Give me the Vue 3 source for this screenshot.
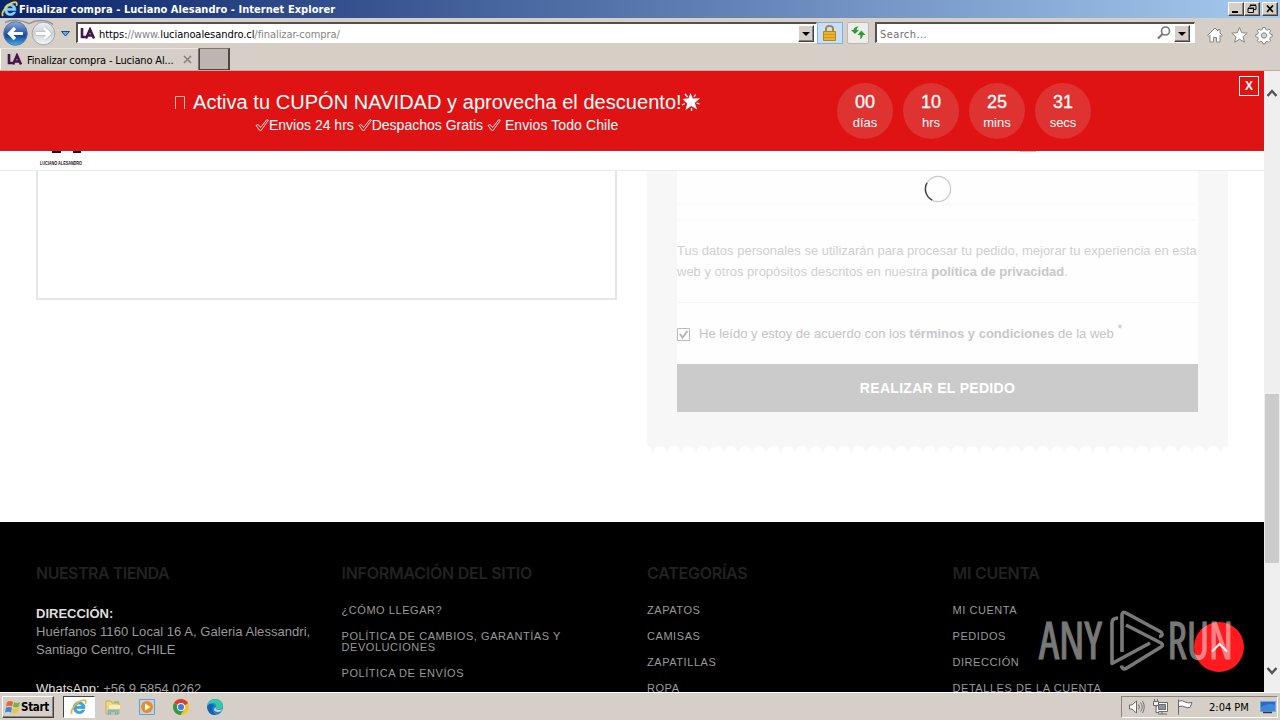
<script setup>
const timer = [
  { n: '00', label: 'días' },
  { n: '10', label: 'hrs' },
  { n: '25', label: 'mins' },
  { n: '31', label: 'secs' },
]
const columns = [
  { title: 'Información del sitio', links: ['¿Cómo llegar?', 'Política de cambios, garantías y devoluciones', 'Política de envíos'] },
  { title: 'Categorías', links: ['Zapatos', 'Camisas', 'Zapatillas', 'Ropa'] },
  { title: 'Mi cuenta', links: ['Mi cuenta', 'Pedidos', 'Dirección', 'Detalles de la cuenta'] },
]
</script>

<template>
  <div class="screen">
    <header class="titlebar">
      <svg class="ie" width="18" height="18" viewBox="0 0 18 18">
        <path d="M15 10.500H6.200c.2 3.400 4.700 3.800 5.800 1.500h2.700c-1.500 5.200-11.300 5.200-11.300-2.700 0-7.500 12-7.500 11.600 1.200zM6.300 8.300h5.500c-.4-3-5-3-5.500 0z" fill="#7fd0fa" stroke="#7fd0fa" stroke-width=".5" />
        <path d="M2 16C-1 12 8 2.500 14 2.200c2.300 0 2 2.300 1.300 3.500" fill="none" stroke="#f2d33c" stroke-width="1.700" />
      </svg>
      <span class="title">Finalizar compra - Luciano Alesandro - Internet Explorer</span>
      <div class="winbtns">
        <button><svg width="14" height="12"><path d="M3 9h6" stroke="#000" stroke-width="2" /></svg></button>
        <button><svg width="14" height="12"><path d="M5 2.500h6v4H9M5 2.500V4M5 2h6" fill="none" stroke="#000" /><path d="M3 5.500h5.500v4H3zM3 5h6" fill="none" stroke="#000" /></svg></button>
        <button class="close"><svg width="14" height="12"><path d="M4 2.500l6 6.500M10 2.500l-6 6.500" stroke="#000" stroke-width="1.700" /></svg></button>
      </div>
    </header>

    <div class="toolbar">
      <svg class="nav" width="76" height="30" viewBox="0 0 76 30">
        <defs>
          <linearGradient id="blue" x1="0" y1="0" x2="0" y2="1"><stop offset="0" stop-color="#8fadd8" /><stop offset=".45" stop-color="#2c5fb4" /><stop offset=".6" stop-color="#1248a0" /><stop offset="1" stop-color="#45b0f2" /></linearGradient>
          <linearGradient id="pale" x1="0" y1="0" x2="0" y2="1"><stop offset="0" stop-color="#eef0f2" /><stop offset=".5" stop-color="#cdd2d8" /><stop offset="1" stop-color="#f4f8fb" /></linearGradient>
        </defs>
        <path d="M5 4.500C12 1 22 2 29 5.500c8-4 18-4 24 1" fill="none" stroke="#8e949c" stroke-width="1.500" />
        <circle cx="15.500" cy="15.500" r="11.800" fill="url(#blue)" stroke="#5d789f" />
        <circle cx="43.500" cy="15.500" r="11.300" fill="url(#pale)" stroke="#a0a6ad" />
        <path d="M23 15.500H9.500M15 10l-5.500 5.500 5.500 5.500" fill="none" stroke="#fff" stroke-width="3.200" />
        <path d="M36 15.500h14M44 10l5.500 5.500-5.500 5.500" fill="none" stroke="#b0b4bb" stroke-width="4.200" />
        <path d="M36 15.500h14M44 10l5.500 5.500-5.500 5.500" fill="none" stroke="#fff" stroke-width="3" />
        <path d="M61.500 13.500h8l-4 4.500z" fill="#5fb0ea" stroke="#1c4775" />
      </svg>
      <div class="address">
        <svg class="la" width="15" height="13" viewBox="0 0 15 13"><path d="M2 1v9h5M6 11.500L10 2.500l4 9M8 8.500h5" fill="none" stroke="#45164d" stroke-width="2.600" /></svg>
        <span class="url">https:<i>//www.</i>lucianoalesandro.cl<i>/finalizar-compra/</i></span>
        <span class="drop"></span>
      </div>
      <span class="lock"><svg width="24" height="20" viewBox="0 0 24 20"><path d="M8 9V5.500C8 2 15 2 15 5.500V9" fill="none" stroke="#a18436" stroke-width="1.800" /><path d="M5.500 8.500h12v9h-12z" fill="#eab52d" stroke="#b98412" /><path d="M6 11.500h11M6 14.500h11" stroke="#cf9a18" /></svg></span>
      <span class="refresh"><svg width="20" height="20" viewBox="0 0 20 20"><path d="M3 7l4 4 4-4H8.500q0-2 2-3.500Q6 3.500 5.500 7z" fill="#2e9b35" /><path d="M9.500 12l3.800-4.500L17.500 12h-2.700q0 3-3 4 1-1.500.5-4z" fill="#2e9b35" /></svg></span>
      <div class="search">
        <span>Search...</span>
        <svg width="16" height="16" viewBox="0 0 16 16"><circle cx="9.500" cy="6" r="4" fill="none" stroke="#777" stroke-width="1.600" /><path d="M6.500 9L2 13.500" stroke="#777" stroke-width="2.200" /></svg>
        <span class="drop"></span>
      </div>
      <svg class="tools" width="74" height="20" viewBox="0 0 74 20">
        <g fill="#fff" stroke="#8b8782" stroke-width="1">
          <path d="M1.500 10.500L9 3l3 3V4.500h2V8l2.500 2.500-1.500 1-1-1V17h-3.500v-4.500h-3V17H4v-6.500l-1 1z" />
          <path d="M33.500 2.500l2.200 5.200 5.600.4-4.300 3.600 1.400 5.500-4.900-3-4.900 3 1.400-5.500-4.300-3.600 5.600-.4z" />
          <path d="M56.800 2.500h2.400l.5 2 1.500.6 1.800-1.100 1.700 1.700-1.100 1.800.6 1.500 2 .5v2.400l-2 .5-.6 1.500 1.100 1.800-1.700 1.700-1.800-1.100-1.500.6-.5 2h-2.400l-.5-2-1.500-.6-1.800 1.100-1.700-1.700 1.100-1.800-.6-1.500-2-.5V9.500l2-.5.6-1.500-1.100-1.800 1.700-1.700 1.800 1.100 1.500-.6z" />
          <circle cx="58" cy="10.500" r="2.700" fill="#d6cfc7" />
        </g>
      </svg>
    </div>

    <div class="tabs">
      <div class="tab">
        <svg class="la" width="15" height="13" viewBox="0 0 15 13"><path d="M2 1v9h5M6 11.500L10 2.500l4 9M8 8.500h5" fill="none" stroke="#45164d" stroke-width="2.600" /></svg>
        <span>Finalizar compra - Luciano Al...</span>
        <svg class="x" width="9" height="9"><path d="M1 1l7 7M8 1L1 8" stroke="#85817c" stroke-width="1.600" /></svg>
      </div>
      <div class="newtab"></div>
    </div>

    <div class="view">
      <div class="page">
        <section class="banner">
          <div class="promo">
            <div class="big"><svg width="12" height="15"><path d="M.5 14V1.500h9V14" fill="none" stroke="#ffb9a8" /></svg><span>Activa tu CUPÓN NAVIDAD y aprovecha el descuento!</span><svg width="20" height="20" viewBox="0 0 20 20"><path d="M9.500 1l2.300 5.500 7.200-.2-5.200 4.700 2.400 6.500-6-3.400-5.700 3.900 1.700-6.500L1.500 7l6-.7z" fill="#fff" /><path d="M4 2l2.500 3M14.500 2.500L13 5M18.500 12l-3-1M10.500 19v-3M1 13l3-1.500" stroke="#fff" stroke-width="1.300" /></svg></div>
            <div class="small">
              <svg width="14" height="14" viewBox="0 0 14 14"><path d="M1 7.500l2-1 2.500 3L12 1.500l1.300.8L6 12.500H4.800z" fill="none" stroke="#ffe0d8" /></svg><span>Envios 24 hrs </span>
              <svg width="14" height="14" viewBox="0 0 14 14"><path d="M1 7.500l2-1 2.500 3L12 1.500l1.300.8L6 12.500H4.800z" fill="none" stroke="#ffe0d8" /></svg><span>Despachos Gratis </span>
              <svg width="14" height="14" viewBox="0 0 14 14"><path d="M1 7.500l2-1 2.500 3L12 1.500l1.300.8L6 12.500H4.800z" fill="none" stroke="#ffe0d8" /></svg><span class="last">&nbsp;Envios Todo Chile</span>
            </div>
          </div>
          <div class="timer">
            <div v-for="t in timer" :key="t.label" class="unit"><b>{{ t.n }}</b><span>{{ t.label }}</span></div>
          </div>
          <button class="bx">X</button>
        </section>

        <div class="sitehead">
          <svg width="46" height="16" viewBox="0 0 46 16"><path d="M13 1h9M34 1h8" stroke="#2a0a30" stroke-width="2" /><text x="1" y="14" textLength="42" lengthAdjust="spacingAndGlyphs" font-size="5" font-weight="700" font-family="Liberation Sans, sans-serif" fill="#1c0a20">LUCIANO ALESANDRO</text></svg>
          <span class="menubit"></span>
        </div>

        <main class="checkout">
          <div class="frame"></div>
          <div class="order">
            <div class="inner">
              <div class="pay"><svg width="28" height="28" viewBox="0 0 28 28"><circle cx="14" cy="14" r="12.600" fill="none" stroke="#c9c9c9" stroke-width="1.300" /><path d="M3 7.900A12.600 12.600 0 0 0 8.200 25.200" fill="none" stroke="#444" stroke-width="1.500" /></svg></div>
              <p class="privacy"><span class="l1">Tus datos personales se utilizarán para procesar tu pedido, mejorar tu experiencia en esta</span><br><span class="l2">web y otros propósitos descritos en nuestra <b>política de privacidad</b>.</span></p>
              <div class="terms">
                <svg width="13" height="13"><path d="M.5.500h12v12H.5z" fill="#fff" stroke="#bbb" /><path d="M3 6l2.500 3.500L10.500 3" fill="none" stroke="#b5b5b5" stroke-width="2" /></svg>
                <span>He leído y estoy de acuerdo con los <b>términos y condiciones</b> de la web <sup>*</sup></span>
              </div>
              <button class="place">REALIZAR EL PEDIDO</button>
            </div>
          </div>
        </main>

        <footer class="footer">
          <div class="col first">
            <h4>NUESTRA TIENDA</h4>
            <p class="addr"><b>DIRECCIÓN:</b><br><span>Huérfanos 1160 Local 16 A, Galeria Alessandri,</span><br>Santiago Centro, CHILE</p>
            <p class="wa"><b>WhatsApp:</b> +56 9 5854 0262</p>
          </div>
          <div v-for="c in columns" :key="c.title" class="col">
            <h4>{{ c.title }}</h4>
            <ul><li v-for="l in c.links" :key="l">{{ l }}</li></ul>
          </div>
          <svg class="watermark" width="212" height="66" viewBox="0 0 212 66">
            <circle cx="184" cy="37" r="25" fill="#fe1a1e" />
            <path d="M177 41.500l7.500-7.500 7.500 7.500" fill="none" stroke="#fff" stroke-width="2" />
            <g opacity=".5">
              <g fill="#f0f0f0" stroke="#f0f0f0" stroke-width="1" font-family="Open Sans, Noto Sans, sans-serif" font-size="50.500">
                <text x="4" y="48.700" textLength="63" lengthAdjust="spacingAndGlyphs">ANY</text>
                <text x="132.500" y="48.700" textLength="65.500" lengthAdjust="spacingAndGlyphs">RUN</text>
              </g>
              <g fill="none" stroke="#f0f0f0" stroke-width="3.600" stroke-linejoin="round">
                <path d="M83 8q-6 0-6 5v40.500L115 33" />
                <path d="M87 42V5q0-4 4-2l35 19q3 4-2 4.500" />
                <path d="M91 15l35 18q3 2 0 4L91 58.500q-4 1.500-4.500-3" />
              </g>
            </g>
          </svg>
        </footer>
      </div>

      <div class="scrollbar">
        <svg width="16" height="16"><path d="M3.500 11L8 6l4.500 5" fill="none" stroke="#555" stroke-width="2.500" /></svg>
        <span class="thumb"></span>
        <svg class="down" width="16" height="16"><path d="M3.500 5L8 10l4.500-5" fill="none" stroke="#555" stroke-width="2.500" /></svg>
      </div>
    </div>

    <nav class="taskbar">
      <button class="start">
        <svg width="16" height="16" viewBox="0 0 16 16"><path d="M2 3q3-2 6 0L7 7.500Q4 6 1 7.500z" fill="#ea6630" /><path d="M9 3.300q3 1.500 6 0L13.500 8Q11 9 8 7.800z" fill="#6cb83a" /><path d="M1 8.800q3-1.700 6 0L6 13.500q-3-1.500-6 0z" fill="#3b85d8" /><path d="M8 9q3 1.500 6 0l-1.500 4.500Q10 15 7 13.800z" fill="#f5c32d" /></svg>
        <span>Start</span>
      </button>
      <div class="task active"><svg width="18" height="18" viewBox="0 0 18 18"><path d="M15 10.500H6.200c.2 3.400 4.700 3.800 5.800 1.500h2.700c-1.500 5.200-11.300 5.200-11.300-2.700 0-7.500 12-7.500 11.600 1.200zM6.300 8.300h5.500c-.4-3-5-3-5.500 0z" fill="#37a5e6" stroke="#2f8fd0" stroke-width=".6" /><path d="M2 16C-1 12 8 2.500 14 2.200c2.300 0 2 2.300 1.300 3.500" fill="none" stroke="#e8b92c" stroke-width="1.700" /></svg></div>
      <div class="task"><svg width="18" height="18" viewBox="0 0 18 18"><path d="M2 3h5l1 2h7v11H2z" fill="#f1d77c" stroke="#d0ad4e" /><path d="M5 7h11v4H5z" fill="#f9eeb8" /><path d="M4 16v-4h10v4h-2.500v-2h-5v2z" fill="#7ec1e8" stroke="#5aa3d0" stroke-width=".6" /><path d="M10 4h5" stroke="#69b35a" /></svg></div>
      <div class="task"><svg width="18" height="18" viewBox="0 0 18 18"><path d="M1.500 1.500h15v15h-15z" fill="#b7d7f0" stroke="#6c9dcc" /><circle cx="9" cy="9" r="6" fill="#f28a1c" /><path d="M7 5.500l5.500 3.500L7 12.500z" fill="#fff" /></svg></div>
      <div class="task"><svg width="18" height="18" viewBox="0 0 18 18"><circle cx="9" cy="9" r="8" fill="#f8c422" /><path d="M9 9L2.100 5A8 8 0 0 1 15.900 5z" fill="#dd3c30" /><path d="M9 9L2.100 5A8 8 0 0 0 8.500 17l3.900-6z" fill="#33984b" /><path d="M5 5h11l-4 3H6z" fill="#dd3c30" /><circle cx="9" cy="9" r="4" fill="#fff" /><circle cx="9" cy="9" r="3.100" fill="#3f7de8" /></svg></div>
      <div class="task"><svg width="18" height="18" viewBox="0 0 18 18"><circle cx="9" cy="9" r="8" fill="#1b86d3" /><path d="M1.200 8Q3 1 9 1q7 0 8 6.500 0 4-4.500 4-3 0-2.500-2Q11 5 6 5 3 5 1.200 8z" fill="#36c6a8" /><path d="M1.100 8.500Q4 4.500 8 7q-4 6 2 9.900Q2 17.500 1.100 8.500z" fill="#1460ad" /><path d="M10 9q-1 3 2.500 3 2.500 0 4-1.300-1 3-3.500 3.300-5 .2-5-3z" fill="#d6cfc7" /></svg></div>
      <div class="tray">
        <svg width="72" height="18" viewBox="0 0 72 18">
          <g fill="#fff" stroke="#6a6a6a">
            <path d="M3.500 7H6l4.500-4v12L6 11H3.500z" />
            <path d="M12.500 6.500q2 2.500 0 5M14.500 4.500q3.500 4.500 0 9M16.500 3q3.500 6 0 12" fill="none" stroke-width=".9" />
            <path d="M30.500 4.500h11v9h-11zM32 16h9M36 13.500v2.500" /><path d="M32.500 6.500h7v5h-7z" fill="#8d9296" /><path d="M27.500 3.500h5v4h-5zM28.500 1v2.500M31.500 1v2.500M30 7.500v7h3" fill="#eee" />
            <path d="M52.500 1.500v15M53 3q4-1 6 1 3 1.500 7 .5l-2 5q-3 .5-5-.5-2-1.500-6-.5" />
          </g>
        </svg>
        <span>2:04 PM</span>
        <svg class="desk" width="16" height="16" viewBox="0 0 16 16"><path d="M.5 2.500h15v10H.5z" fill="#276bc8" stroke="#74a4da" /><path d="M1 8q8-5 14-2v6H1z" fill="#3f87dc" /><path d="M3 13.500h9" stroke="#334" stroke-width="1.500" /></svg>
      </div>
    </nav>
  </div>
</template>

<style>
body { margin: 0; overflow: hidden; }
</style>

<style scoped>
* { box-sizing: border-box; }
button { padding: 0; border: 0; font: inherit; }
svg { display: block; flex: none; }
.screen { width: 1280px; height: 720px; display: flex; flex-direction: column; overflow: hidden; background: #d6cfc7; font: 11px "DejaVu Sans Condensed", "DejaVu Sans", sans-serif; font-stretch: condensed; color: #000; }
.titlebar { height: 18px; flex: none; display: flex; align-items: center; background: linear-gradient(90deg, #0a246a, #a6caf0); padding: 0 2px 0 1px; }
.title { color: #fff; font-weight: 700; white-space: nowrap; flex: 1; letter-spacing: .045px; }
.winbtns { display: flex; }
.winbtns button, .drop { background: #d6cfc7; border: 1px solid; border-color: #fff #404040 #404040 #fff; box-shadow: inset -1px -1px #8a857e; }
.winbtns button { width: 16px; height: 14px; }
.winbtns .close { margin-left: 2px; }
.toolbar { height: 28px; flex: none; display: flex; align-items: flex-start; }
.address, .search { height: 21px; margin-top: 4px; background: #fff; border: 1px solid #fff; border-top: 2px solid #55504b; border-left: 2px solid #55504b; display: flex; align-items: center; white-space: nowrap; }
.address { width: 741px; padding: 0 2px; }
.url { flex: 1; margin: 2px 0 0 4px; letter-spacing: -.06px; }
.url i { font-style: normal; color: #858585; }
.drop { width: 16px; height: 17px; position: relative; }
.drop::after { content: ""; display: block; margin: 6px auto 0; width: 0; border: 4px solid transparent; border-top-color: #000; border-bottom: 0; }
.lock { width: 26px; height: 22px; margin-top: 4px; border: 1px solid #82aee0; background: #c9dff8; }
.refresh { width: 22px; height: 22px; margin: 4px 0 0 4px; border: 1px solid #bdb9b3; background: #eeedea; border-radius: 2px; }
.search { width: 320px; margin-left: 6px; padding: 0 4px 0 3px; color: #707070; }
.search > span:first-child { flex: 1; margin-top: 2px; letter-spacing: .4px; }
.search svg { margin-right: 2px; }
.tools { margin: 7px 0 0 11px; }
.tabs { height: 25px; flex: none; display: flex; border-bottom: 1px solid #d9a49b; }
.tab { width: 199px; margin-top: 2px; border-left: 1px solid #fff; border-right: 1px solid #77716b; border-top: 1px solid #e9e5e0; display: flex; align-items: center; padding-left: 6px; white-space: nowrap; }
.tab span { margin: 1px 0 0 5px; width: 156px; letter-spacing: -.16px; }
.newtab { width: 31px; height: 22px; margin-top: 2px; background: #bfb5b0; border: 1px solid #4a4642; border-top-color: #7c7670; border-width: 1px 2px 1px 1px; }
.view { height: 621px; flex: none; display: flex; }
.page { width: 1264px; height: 621px; overflow: hidden; background: #fff; font-family: "Liberation Sans", Arial, sans-serif; }
.banner { position: relative; height: 80px; background: #df1314; border-bottom: 1px solid #c3211e; color: #fff; display: flex; }
.promo { width: 837px; padding: 19px 0 0 175px; white-space: nowrap; }
.big { display: flex; height: 24px; align-items: center; font-size: 20px; }
.big span { margin-left: 6px; width: 488px; letter-spacing: .045px; }
.small { display: flex; align-items: center; height: 22px; padding-left: 80px; font-size: 14px; white-space: pre; }
.small .last { letter-spacing: .1px; }
.timer { display: flex; gap: 10px; padding-top: 12px; }
.unit { width: 56px; height: 56px; border-radius: 50%; background: #df3332; text-align: center; display: flex; flex-direction: column; }
.unit b { font-weight: 400; font-size: 18px; line-height: 20px; margin-top: 9px; -webkit-text-stroke: .3px; }
.unit span { font-size: 13px; line-height: 20px; margin-top: 1px; }
.bx { position: absolute; right: 5px; top: 5px; width: 20px; height: 20px; border: 1px solid #fff; background: none; color: #fff; font-size: 12px; font-weight: 700; }
.sitehead { height: 20px; border-bottom: 1px solid #ececec; padding-left: 39px; display: flex; }
.menubit { width: 16px; height: 1px; margin-left: 935px; background: #e8b0aa; }
.checkout { height: 351px; display: grid; grid-template-columns: 581px 581px; gap: 30px; padding-left: 36px; }
.frame { height: 129px; border: 2px solid #e6e6e6; border-top: 0; }
.order { height: 281px; padding: 0 30px; background: radial-gradient(circle at 7px 7px, #fff 5.700px, #f7f7f7 6.300px) 6px 274px / 14.200px 7px repeat-x, linear-gradient(#f7f7f7, #f7f7f7) 0 0 / 100% 274px no-repeat; }
.inner { height: 241px; background: #fefefe; color: #d0d0d0; font-size: 13px; }
.pay { height: 50px; padding: 4px 0 0 247px; border-bottom: 2px solid #fbfbfb; background: linear-gradient(#fcfcfc, #fcfcfc) 0 31px / 100% 4px no-repeat; }
.privacy { height: 82px; margin: 0; padding-top: 19px; line-height: 21px; border-bottom: 1px solid #f4f4f4; white-space: nowrap; }
.privacy b, .terms b { color: #c8c8c8; }
.terms { height: 61px; display: flex; align-items: center; gap: 9px; white-space: nowrap; color: #c4c4c4; }
.terms svg { margin-top: 2px; }
.terms sup { font-size: 12px; line-height: 0; }
.place { display: block; width: 521px; height: 48px; background: #cbcbcb; color: #fff; font-size: 14px; font-weight: 700; letter-spacing: .3px; }
.footer { position: relative; height: 170px; background: #000; color: #999; display: grid; grid-template-columns: repeat(4, 305.500px); padding-left: 36px; }
h4 { margin: 40px 0 0; height: 22px; color: #222; font: 600 16px/22px Inter, sans-serif; letter-spacing: -.24px; text-transform: uppercase; white-space: nowrap; }
.first h4 { letter-spacing: -.5px; }
.addr, .wa { margin: 21px 0 0; font-size: 13px; line-height: 18px; white-space: nowrap; }
.addr b { color: #ddd; }
.addr span { letter-spacing: .045px; }
.wa b { font-weight: 400; color: #ddd; }
ul { list-style: none; margin: 21px 0 0; padding: 0; width: 240px; }
li { font-size: 11px; line-height: 11px; margin-bottom: 15px; letter-spacing: .56px; text-transform: uppercase; }
.watermark { position: absolute; left: 1035px; top: 88px; }
.scrollbar { width: 16px; background: #efefef; display: flex; flex-direction: column; padding-top: 14px; }
.thumb { margin: 293px 1px 0; height: 169px; background: #cbcbcb; }
.down { margin-top: 100px; }
.taskbar { height: 28px; flex: none; display: flex; border-top: 1px solid #fff; padding: 3px 2px 2px; background: #d6cfc7; font-size: 12px; }
.start { width: 52px; height: 22px; display: flex; align-items: center; padding-left: 2px; background: #d6cfc7; border: 1px solid; border-color: #fff #404040 #404040 #fff; box-shadow: inset -1px -1px #8a857e; font-weight: 700; font-size: 11.500px; margin-right: 9px; }
.start span { letter-spacing: -.3px; }
.task { width: 34px; height: 22px; display: grid; place-items: center; }
.task.active { width: 32px; margin-right: 1px; background: #fff; border: 1px solid #fff; border-top-color: #444; border-left-color: #444; }
.tray { margin-left: auto; width: 157px; height: 22px; border: 1px solid; border-color: #8a857e #fff #fff #8a857e; display: flex; align-items: center; padding-left: 4px; white-space: nowrap; font-size: 11px; }
.tray span { margin-left: 11px; width: 51px; }
</style>
